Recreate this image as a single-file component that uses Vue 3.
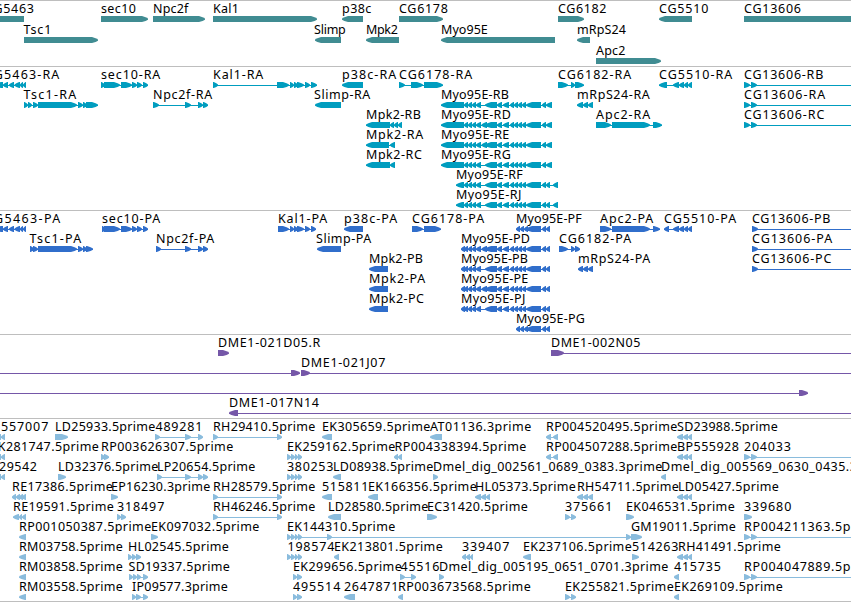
<template>
  <div class="browser">
    <section v-for="track in tracks" :key="track.name" class="track" :class="track.name">
      <svg class="lane" width="851" :height="track.height - 1">
        <g v-for="(item, i) in track.items" :key="i" :transform="`translate(0 ${item.row * track.pitch})`">
          <rect v-if="item.line" class="intron" :x="item.line[0]" y="18" :width="item.line[1] - item.line[0]" height="1" />
          <path class="exon" :d="item.path" />
          <text v-if="item.label" class="label" :x="item.x" y="12" :textLength="item.width" lengthAdjust="spacing">{{ item.label }}</text>
        </g>
      </svg>
    </section>
  </div>
</template>

<script setup>
const EDGE = 860;

// One exon: a box with a pointed end, close to a triangle when it is short
const arrow = (dir, [a, b]) => {
  const head = Math.min((b - a) * 0.85, 6);
  const [base, tip, s] = dir === 'R' ? [a, b, 1] : [b, a, -1];
  const neck = tip - s * head;
  const bend = tip - s * head * 0.4;
  return `M${base} 15H${neck}L${bend} 16.2L${tip} 17.4V18.8L${bend} 20L${neck} 21H${base}Z`;
};

const build = ([row, label, x, end, dir, exons, span]) => {
  const first = exons[0][0];
  const last = exons[exons.length - 1][1];
  return {
    row,
    label,
    x: x - 0.5,
    width: end - x + 0.8,
    line: span || (exons.length > 1 ? [first, last] : null),
    path: exons.map((e) => arrow(dir, e)).join('')
  };
};

// Exon groups shared by several transcripts
const cg5463 = [[-5, 3], [3, 8], [9, 14], [14.5, 20], [20, 23], [23, 26]];
const sec10 = [[104, 120], [121, 132], [132, 137], [137, 142], [143, 148]];
const tsc1 = [[38, 77], [78, 83], [83, 87]];
const npc2f = [[185, 191], [198, 203], [203, 208]];
const kal1 = [[290, 294], [294, 298], [297, 304], [305, 310]];
const myoHead = [[464, 468], [468, 472], [472, 476], [476, 481]];
const myoExtra = [[481.5, 487]];
const myoMid = [[485, 497], [497, 502], [503, 509], [510, 514], [514, 518], [518, 522], [522, 526]];
const myoTail = [[526, 541], [542, 546], [546, 552]];
const myoTailP = [[526, 541], [542, 546], [546, 550]];
const cg5510 = [[673, 679], [679, 684], [684, 688], [688, 692]];
const cg13606 = [[744, 750], [751, 757]];
const mrps24 = [[583, 588], [588, 593]];
const rh = [[213, 218], [277, 282]];
const sd = [[677, 683], [683, 688], [688, 692]];
const ek = [[287, 291], [291, 295], [295, 298], [298, 302]];

const genes = [
  [0, 'CG5463', -14.5, 33.7, 'L', [[-20, 24]]],
  [1, 'Tsc1', 24, 51, 'R', [[24, 98]]],
  [0, 'sec10', 101.5, 135.5, 'R', [[101, 148]]],
  [0, 'Npc2f', 153.5, 188, 'R', [[153, 205]]],
  [0, 'Kal1', 213.5, 238.5, 'R', [[213, 317]]],
  [1, 'Slimp', 314.5, 345.5, 'L', [[315, 341]]],
  [0, 'p38c', 342.5, 371, 'L', [[342, 363]]],
  [1, 'Mpk2', 366.5, 397.5, 'L', [[366, 399]]],
  [0, 'CG6178', 399.5, 447.5, 'R', [[399, 443]]],
  [1, 'Myo95E', 441.5, 487.5, 'L', [[441, 555]]],
  [0, 'CG6182', 558.5, 606, 'R', [[558, 584]]],
  [1, 'mRpS24', 577.5, 625.5, 'L', [[577, 590]]],
  [2, 'Apc2', 596.5, 625, 'R', [[596, 661]]],
  [0, 'CG5510', 659.5, 708, 'L', [[659, 692]]],
  [0, 'CG13606', 744.5, 800.7, 'R', [[744, EDGE]]]
];

const transcripts = [
  [0, 'CG5463-RA', -14.5, 59, 'L', cg5463],
  [1, 'Tsc1-RA', 24, 76, 'R', [[24, 28], [28, 32], [33, 38], ...tsc1, [86, 98]]],
  [0, 'sec10-RA', 101.5, 160, 'R', [[101, 105], ...sec10]],
  [1, 'Npc2f-RA', 153.5, 212, 'R', [[153, 159], ...npc2f]],
  [0, 'Kal1-RA', 213.5, 263, 'R', [[213, 218], [277, 289], ...kal1, [311, 317]]],
  [1, 'Slimp-RA', 314.5, 370, 'L', [[315, 341]]],
  [0, 'p38c-RA', 342.5, 396, 'L', [[342, 363]]],
  [2, 'Mpk2-RB', 366.5, 420.5, 'L', [[366, 390], [390, 394], [394, 398], [398, 402]]],
  [3, 'Mpk2-RA', 366.5, 423, 'L', [[366, 389], [390, 395]]],
  [4, 'Mpk2-RC', 366.5, 421.5, 'L', [[366, 390], [390, 395]]],
  [0, 'CG6178-RA', 399.5, 472, 'R', [[399, 405], [411, 423], [424, 443]]],
  [1, 'Myo95E-RB', 441.5, 508.5, 'L', [[441, 464], ...myoHead, ...myoMid, ...myoTail]],
  [2, 'Myo95E-RD', 441.5, 510.5, 'L', [[441, 464], ...myoHead, ...myoExtra, ...myoMid, ...myoTail]],
  [3, 'Myo95E-RE', 441.5, 509, 'L', [[441, 464], ...myoHead, ...myoExtra, ...myoMid, ...myoTail]],
  [4, 'Myo95E-RG', 441.5, 510.5, 'L', [[441, 464], ...myoHead, ...myoMid, ...myoTail]],
  [5, 'Myo95E-RF', 456.5, 522.5, 'L', [[456, 464], ...myoHead, ...myoMid, ...myoTailP, [553, 558]]],
  [6, 'Myo95E-RJ', 456.5, 521, 'L', [[456, 464], ...myoHead, ...myoMid, ...myoTailP, [553, 558]]],
  [0, 'CG6182-RA', 558.5, 631, 'R', [[558, 568], [571, 575], [575, 584]]],
  [1, 'mRpS24-RA', 577.5, 649.5, 'L', [[577, 583], ...mrps24]],
  [2, 'Apc2-RA', 596.5, 650, 'R', [[596, 611], [612, 650], [653, 662]]],
  [0, 'CG5510-RA', 659.5, 732, 'L', [[659, 667], ...cg5510]],
  [0, 'CG13606-RB', 744.5, 823, 'R', cg13606, [744, EDGE]],
  [1, 'CG13606-RA', 744.5, 825, 'R', cg13606, [744, EDGE]],
  [2, 'CG13606-RC', 744.5, 824, 'R', cg13606, [744, EDGE]]
];

const proteins = [
  [0, 'CG5463-PA', -14.5, 60, 'L', cg5463],
  [1, 'Tsc1-PA', 30, 81, 'R', [[30, 34], [33, 38], ...tsc1, [86, 93]]],
  [0, 'sec10-PA', 102.5, 160, 'R', [[102, 106], ...sec10]],
  [1, 'Npc2f-PA', 156.5, 214, 'R', [[156, 161], ...npc2f]],
  [0, 'Kal1-PA', 278.5, 327, 'R', [[278, 289], ...kal1, [311, 316]]],
  [1, 'Slimp-PA', 316.5, 371, 'L', [[317, 341]]],
  [0, 'p38c-PA', 344.5, 397, 'L', [[344, 363]]],
  [2, 'Mpk2-PB', 369.5, 422.5, 'L', [[369, 388]]],
  [3, 'Mpk2-PA', 369.5, 425, 'L', [[369, 388]]],
  [4, 'Mpk2-PC', 369.5, 423.5, 'L', [[369, 388]]],
  [0, 'CG6178-PA', 412.5, 484, 'R', [[412, 423], [424, 441]]],
  [0, 'Myo95E-PF', 516.5, 581.5, 'L', [[516, 520], [520, 524], [524, 528], ...myoTailP]],
  [1, 'Myo95E-PD', 461.5, 529.5, 'L', [[461, 465], ...myoHead, ...myoExtra, ...myoMid, ...myoTailP]],
  [2, 'Myo95E-PB', 461.5, 527.5, 'L', [[461, 465], ...myoHead, ...myoMid, ...myoTailP]],
  [3, 'Myo95E-PE', 461.5, 528, 'L', [[461, 465], ...myoHead, ...myoExtra, ...myoMid, ...myoTailP]],
  [4, 'Myo95E-PJ', 461.5, 525, 'L', [[461, 465], ...myoHead, ...myoMid, ...myoTailP]],
  [5, 'Myo95E-PG', 516.5, 584.5, 'L', [[516, 520], [520, 524], [524, 528], ...myoTailP]],
  [1, 'CG6182-PA', 559.5, 631, 'R', [[559, 568], [571, 575], [575, 580]]],
  [2, 'mRpS24-PA', 578.5, 650, 'L', [[578, 583], ...mrps24]],
  [0, 'Apc2-PA', 600.5, 653, 'R', [[600, 611], [612, 650], [653, 660]]],
  [0, 'CG5510-PA', 664.5, 736, 'L', [[664, 669], ...cg5510]],
  [0, 'CG13606-PB', 752.5, 830, 'R', [[752, 758]], [752, EDGE]],
  [1, 'CG13606-PA', 752.5, 832, 'R', [[752, 758]], [752, EDGE]],
  [2, 'CG13606-PC', 752.5, 831, 'R', [[752, 758]], [752, EDGE]]
];

const clones = [
  [0, 'DME1-021D05.R', 218.5, 320, 'R', [[218, 229]]],
  [0, 'DME1-002N05', 551.5, 640, 'R', [[551, 564]], [551, EDGE]],
  [1, '', 0, 0, 'R', [[291, 300]], [0, 300]],
  [1, 'DME1-021J07', 301.5, 385, 'R', [[301, 310]], [301, EDGE]],
  [2, '', 0, 0, 'R', [[799, 808]], [0, 808]],
  [3, 'DME1-017N14', 229.5, 318.5, 'L', [[229, 238]], [229, EDGE]]
];

const ests = [
  [0, '557007', 1.5, 48, 'L', [[-3, 1], [1, 5]]],
  [0, 'LD25933.5prime', 55.5, 155, 'R', [[55, 68]]],
  [0, '489281', 156, 202, 'R', [[155, 160], [185, 191], [198, 203]]],
  [0, 'RH29410.5prime', 213.5, 315, 'R', rh],
  [0, 'EK305659.5prime', 322.5, 430, 'L', [[322, 332]]],
  [0, 'AT01136.3prime', 430.5, 531, 'L', [[430, 442]]],
  [0, 'RP004520495.5prime', 546.5, 677, 'L', [[546, 551], [553, 558]]],
  [0, 'SD23988.5prime', 677.5, 777.5, 'L', sd],
  [1, 'EK281747.5prime', -9, 98.5, 'L', [[-3, 1], [1, 5]]],
  [1, 'RP003626307.5prime', 101.5, 233, 'R', [[101, 105], [104, 109]]],
  [1, 'EK259162.5prime', 287.5, 395, 'R', ek],
  [1, 'RP004338394.5prime', 395, 526, 'L', [[394, 398], [398, 402]]],
  [1, 'RP004507288.5prime', 546.5, 677, 'L', [[546, 551], [553, 558]]],
  [1, 'BP555928', 677.5, 738.5, 'L', sd],
  [1, '204033', 744.5, 790.5, 'R', cg13606, [744, EDGE]],
  [2, '29542', -0.5, 36.5, 'L', [[-3, 1], [1, 5]]],
  [2, 'LD32376.5prime', 58.5, 158, 'R', [[58, 66]]],
  [2, 'LP20654.5prime', 157.5, 255, 'R', [[157, 162], ...npc2f]],
  [2, '380253', 287.5, 333, 'R', ek],
  [2, 'LD08938.5prime', 333.5, 433, 'L', [[333, 341]]],
  [2, 'Dmel_dig_002561_0689_0383.3prime', 433.5, 662, 'R', [[433, 438]]],
  [2, 'Dmel_dig_005569_0630_0435.3prime', 661.5, 894, 'L', [[661, 666]]],
  [3, 'RE17386.5prime', 12.5, 112.5, 'L', [[12, 16], [16, 20], [19, 23], [22, 26]]],
  [3, 'EP16230.3prime', 111.5, 210, 'R', [[111, 118]]],
  [3, 'RH28579.5prime', 213.5, 315, 'R', rh],
  [3, '515811', 322.5, 368, 'L', [[322, 332]]],
  [3, 'EK166356.5prime', 368.5, 476.5, 'L', [[368, 378]]],
  [3, 'HL05373.5prime', 475.5, 575.5, 'L', [[475, 481], [481, 486], [486, 490]]],
  [3, 'RH54711.5prime', 577.5, 678.5, 'L', [[577, 583], ...mrps24]],
  [3, 'LD05427.5prime', 678.5, 778.5, 'L', sd],
  [4, 'RE19591.5prime', 13.5, 113.5, 'L', [[13, 19], [19, 22], [22, 26]]],
  [4, '318497', 117.5, 164, 'R', [[117, 121], [121, 126]]],
  [4, 'RH46246.5prime', 213.5, 315, 'R', rh],
  [4, 'LD28580.5prime', 328.5, 428, 'L', [[328, 341]]],
  [4, 'EC31420.5prime', 427.5, 527.5, 'R', [[427, 437]]],
  [4, '375661', 565.5, 612, 'R', [[565, 570], [571, 576]]],
  [4, 'EK046531.5prime', 626.5, 734.5, 'R', [[626, 634]]],
  [4, '339680', 744.5, 791, 'R', [[744, 752]]],
  [5, 'RP001050387.5prime', 19.5, 151, 'L', [[19, 26]]],
  [5, 'EK097032.5prime', 151.5, 259, 'R', [[151, 158]]],
  [5, 'EK144310.5prime', 287.5, 395, 'R', [...ek, [327, 332], [626, 631]]],
  [5, 'GM19011.5prime', 631.5, 735.5, 'R', [[631, 642]]],
  [5, 'RP004211363.5prime', 744.5, 880, 'R', cg13606, [744, EDGE]],
  [6, 'RM03758.5prime', 19.5, 122.5, 'L', [[19, 26]]],
  [6, 'HL02545.5prime', 128.5, 228.5, 'R', [[128, 132], [132, 136], [136, 141]]],
  [6, '198574', 288, 334, 'R', ek],
  [6, 'EK213801.5prime', 334.5, 442.5, 'L', [[334, 339]]],
  [6, '339407', 462.5, 509, 'L', [[462, 466], [466, 470], [470, 473]]],
  [6, 'EK237106.5prime', 523.5, 631.5, 'L', [[523, 531]]],
  [6, '514263', 632.5, 678, 'R', [[632, 639]]],
  [6, 'RH41491.5prime', 678.5, 780.5, 'L', sd],
  [7, 'RM03858.5prime', 19.5, 122.5, 'L', [[19, 26]]],
  [7, 'SD19337.5prime', 129, 229.5, 'R', [[129, 133], [133, 137], [137, 141], [143, 148]]],
  [7, 'EK299656.5prime', 293.5, 401.5, 'R', [[293, 297], [297, 302]]],
  [7, '45516', 401, 439, 'R', [[400, 405], [411, 416]]],
  [7, 'Dmel_dig_005195_0651_0701.3prime', 439.5, 668, 'R', [[439, 444]]],
  [7, '415735', 674.5, 720.5, 'L', [[674, 679]]],
  [7, 'RP004047889.5prime', 744.5, 880, 'R', cg13606, [744, EDGE]],
  [8, 'RM03558.5prime', 19.5, 122.5, 'L', [[19, 26]]],
  [8, 'IP09577.3prime', 132.5, 227.5, 'R', [[132, 136], [136, 141], [143, 148]]],
  [8, '495514', 293.5, 340, 'R', [[293, 297], [297, 302]]],
  [8, '2647871', 344.5, 398, 'L', [[344, 355]]],
  [8, 'RP003673568.5prime', 398.5, 530.5, 'L', [[398, 403]]],
  [8, 'EK255821.5prime', 565.5, 673.5, 'R', [[565, 570], [571, 576]]],
  [8, 'EK269109.5prime', 674.5, 782.5, 'L', [[674, 679]]]
];

const tracks = [
  { name: 'genes', height: 66, pitch: 21, items: genes.map(build) },
  { name: 'transcripts', height: 144, pitch: 20, items: transcripts.map(build) },
  { name: 'proteins', height: 124, pitch: 20, items: proteins.map(build) },
  { name: 'clones', height: 84, pitch: 20, items: clones.map(build) },
  { name: 'ests', height: 183, pitch: 20, items: ests.map(build) }
];
</script>

<style scoped>
.browser {
  width: 851px;
  height: 602px;
  box-sizing: border-box;
  display: flex;
  flex-direction: column;
  overflow: hidden;
  background-color: #ffffff;
  border-bottom: 1px solid #bebebe;
}

.track {
  border-top: 1px solid #bebebe;
}

.lane {
  display: block;
  overflow: hidden;
}

.label {
  font-family: "Noto Sans", "DejaVu Sans", sans-serif;
  font-size: 12.5px;
  fill: #000000;
}

.genes {
  fill: #408c92;
}

.transcripts {
  fill: #009dbf;
}

.proteins {
  fill: #306ecb;
}

.clones {
  fill: #7557a8;
}

.ests {
  fill: #8abcdd;
}
</style>
